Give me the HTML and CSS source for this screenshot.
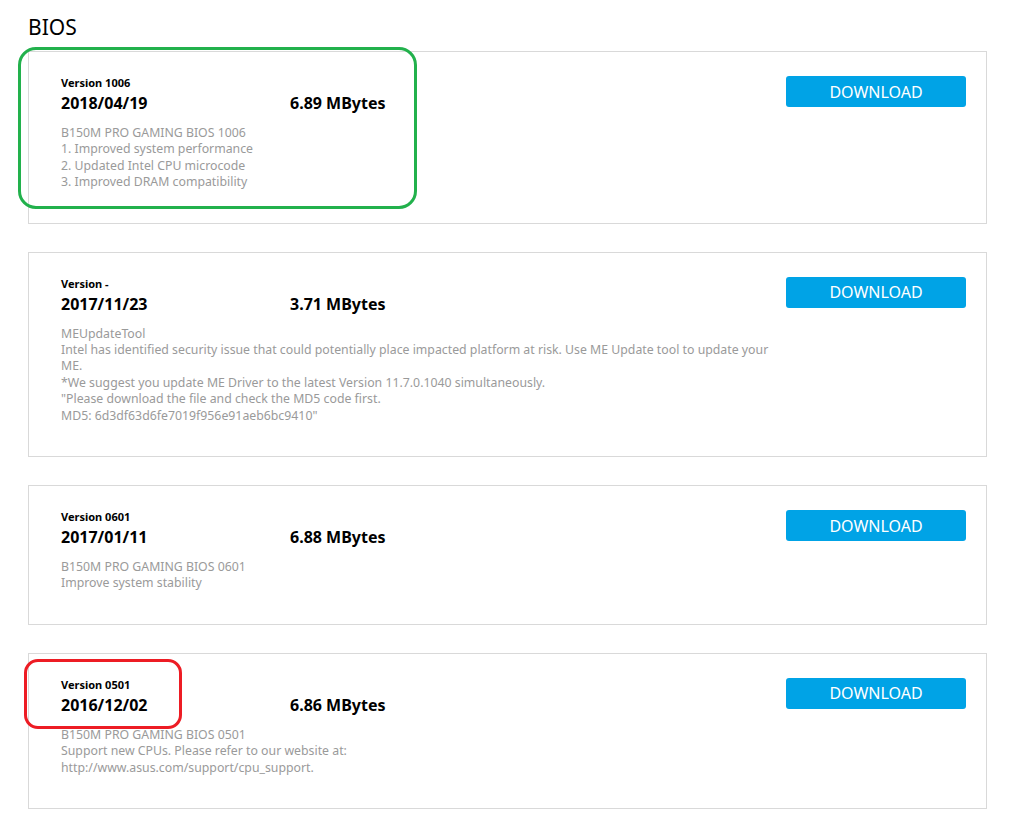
FILE: index.html
```html
<!DOCTYPE html>
<html lang="en">
<head>
  <meta charset="UTF-8">
  <title>BIOS</title>
  <link rel="stylesheet" href="styles.css">
</head>
<body>
  <div class="downloads">
    <h2 class="section-title">BIOS</h2>

    <div class="file-card">
      <div class="file-info">
        <div class="version">Version 1006</div>
        <div class="file-head">
          <span class="date">2018/04/19</span>
          <span class="size">6.89 MBytes</span>
        </div>
        <div class="desc">
          B150M PRO GAMING BIOS 1006<br>
          1. Improved system performance<br>
          2. Updated Intel CPU microcode<br>
          3. Improved DRAM compatibility
        </div>
      </div>
      <button class="download-btn">DOWNLOAD</button>
      <div class="mark mark-green"></div>
    </div>

    <div class="file-card">
      <div class="file-info">
        <div class="version">Version -</div>
        <div class="file-head">
          <span class="date">2017/11/23</span>
          <span class="size">3.71 MBytes</span>
        </div>
        <div class="desc">
          MEUpdateTool<br>
          Intel has identified security issue that could potentially place impacted platform at risk. Use ME Update tool to update your ME.<br>
          *We suggest you update ME Driver to the latest Version 11.7.0.1040 simultaneously.<br>
          "Please download the file and check the MD5 code first.<br>
          MD5: 6d3df63d6fe7019f956e91aeb6bc9410"
        </div>
      </div>
      <button class="download-btn">DOWNLOAD</button>
    </div>

    <div class="file-card">
      <div class="file-info">
        <div class="version">Version 0601</div>
        <div class="file-head">
          <span class="date">2017/01/11</span>
          <span class="size">6.88 MBytes</span>
        </div>
        <div class="desc">
          B150M PRO GAMING BIOS 0601<br>
          Improve system stability
        </div>
      </div>
      <button class="download-btn">DOWNLOAD</button>
    </div>

    <div class="file-card">
      <div class="file-info">
        <div class="version">Version 0501</div>
        <div class="file-head">
          <span class="date">2016/12/02</span>
          <span class="size">6.86 MBytes</span>
        </div>
        <div class="desc">
          B150M PRO GAMING BIOS 0501<br>
          Support new CPUs. Please refer to our website at:<br>
          http://www.asus.com/support/cpu_support.
        </div>
      </div>
      <button class="download-btn">DOWNLOAD</button>
      <div class="mark mark-red"></div>
    </div>
  </div>
</body>
</html>
```

FILE: styles.css
```css
body {
  margin: 0;
  background: #ffffff;
  font-family: 'Noto Sans', 'Open Sans', sans-serif;
  color: #000;
}

.downloads {
  width: 959px;
  margin-left: 28px;
}

.section-title {
  margin: 0;
  padding-top: 13px;
  height: 51px;
  box-sizing: border-box;
  font-size: 21px;
  font-weight: 400;
  line-height: 28px;
}

.file-card {
  position: relative;
  display: flex;
  justify-content: space-between;
  align-items: flex-start;
  border: 1px solid #d9d9d9;
  padding: 24px 20px 32px 32px;
  margin-bottom: 28px;
}

.file-info {
  flex: 1;
  padding-right: 11px;
}

.version {
  font-size: 11px;
  font-weight: 700;
  line-height: 14px;
}

.file-head {
  display: flex;
  font-size: 16px;
  font-weight: 700;
  line-height: 26px;
}

.date {
  width: 229px;
}

.desc {
  margin-top: 9px;
  font-size: 12.3px;
  line-height: 16.4px;
  color: #9a9a9a;
}

.download-btn {
  width: 180px;
  height: 31px;
  flex: none;
  border: none;
  border-radius: 3px;
  background: #00a3e6;
  color: #fff;
  font-family: inherit;
  font-size: 16px;
  padding: 0;
  cursor: pointer;
}

/* hand-drawn highlight rings */
.mark {
  position: absolute;
  border-style: solid;
  pointer-events: none;
}

.mark-green {
  left: -11px;
  top: -5px;
  width: 393px;
  height: 156px;
  border-width: 3px;
  border-color: #22b14c;
  border-radius: 18px;
}

.mark-red {
  left: -5px;
  top: 5px;
  width: 152px;
  height: 64px;
  border-width: 3px;
  border-color: #ed1c24;
  border-radius: 14px;
}
```
